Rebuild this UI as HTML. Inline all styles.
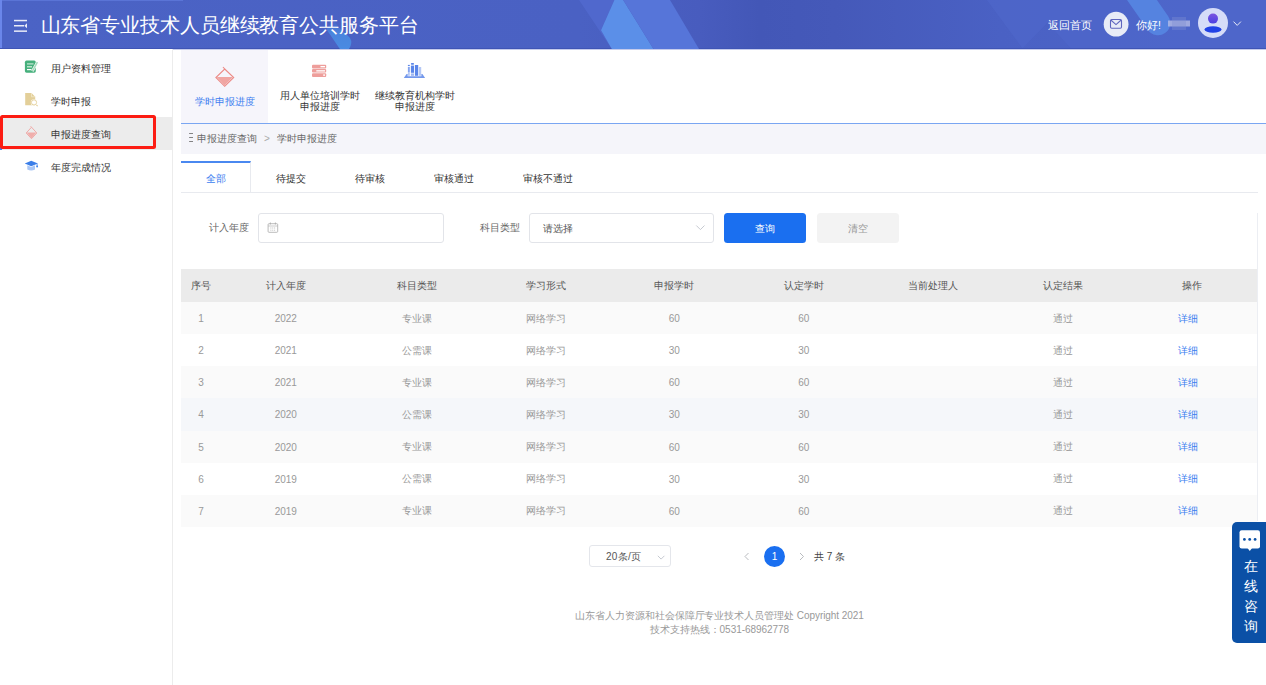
<!DOCTYPE html>
<html><head><meta charset="utf-8">
<style>
*{box-sizing:border-box;margin:0;padding:0}
html,body{width:1266px;height:685px;overflow:hidden;background:#fff}
body{font-family:"Liberation Sans",sans-serif;font-size:10px;color:#333;position:relative}
.abs{position:absolute}
#hdr{left:0;top:0;width:1266px;height:49px;background:#4a61c3;overflow:hidden}
#hdr .title{left:40.5px;top:10px;letter-spacing:-0.1px;font-size:20px;line-height:30px;color:#fff;white-space:nowrap}
#side{left:0;top:49px;width:173px;height:636px;border-right:1px solid #ececec;background:#fff}
.mi{position:absolute;left:0;width:172px;height:33px;line-height:33px;font-size:10px;color:#333}
.mi span{position:absolute;left:51px;top:1px}
.mi svg{position:absolute}
.tt{position:absolute;top:50px;height:73px;width:87px;text-align:center;font-size:10px;line-height:10.5px;color:#333}
.crumb{left:181px;top:124px;width:1085px;height:30px;background:#f5f5fa;color:#666;line-height:29px}
.tabs{left:181px;top:161px;width:1077px;height:32px;border-bottom:1px solid #e8eaef}
.tab{position:absolute;top:0;height:31px;line-height:32px;text-align:center;color:#333;border-top:2px solid transparent}
.inp{position:absolute;top:213px;height:30px;border:1px solid #e2e4e9;border-radius:3px;background:#fff}
.lbl{position:absolute;top:213px;line-height:30px;color:#666}
.btn{position:absolute;top:213px;height:30px;width:82px;border-radius:3.5px;text-align:center;line-height:32px}
table{position:absolute;left:181px;top:269px;width:1076px;border-collapse:collapse;table-layout:fixed}
th{height:33px;background:#ebebeb;font-weight:normal;color:#555;font-size:10px;text-align:center;padding:1px 0 0 0}
td{height:32.14px;color:#999;font-size:10px;text-align:center;padding:1px 0 0 0}
td:nth-child(3),th:nth-child(3){padding-left:4px}
td:nth-child(9){padding-right:9px}
th:nth-child(4),td:nth-child(4){padding-left:2px}
tr.o td{background:#fafafa}
tr.h td{background:#f5f7fa}
td a{color:#3a7ef0;text-decoration:none}
.foot{left:173px;width:1093px;text-align:center;color:#999;font-size:10px;line-height:13.5px;letter-spacing:-0.05px}
</style></head>
<body>
<div id="hdr" class="abs">
<svg class="abs" style="left:0;top:0" width="1266" height="49" viewBox="0 0 1266 49">
<defs>
<linearGradient id="hg" x1="0" x2="1" y1="0" y2="0">
<stop offset="0" stop-color="#4b63c5"/><stop offset="0.458" stop-color="#4a61c3"/><stop offset="0.553" stop-color="#485cbe"/><stop offset="0.6" stop-color="#4357b7"/><stop offset="0.66" stop-color="#4559b9"/><stop offset="0.79" stop-color="#4a61c4"/><stop offset="1" stop-color="#4e66ca"/>
</linearGradient>
<linearGradient id="sg" x1="0" y1="0" x2="0" y2="1"><stop offset="0" stop-color="#4a88e0" stop-opacity="0"/><stop offset="0.45" stop-color="#4a88e0" stop-opacity="0.9"/><stop offset="1" stop-color="#4a8be2"/></linearGradient>
</defs>
<rect width="1266" height="49" fill="url(#hg)"/>
<rect x="0" y="0" width="2" height="49" fill="#6a86ea"/>
<rect x="2" y="0" width="181" height="1" fill="#5a74d6"/>
<polygon points="987,0 1266,0 1266,49 1071.6,49 1047.4,22.8 1022,49 1023,49" fill="#4f66ca" opacity="0.7"/>
<rect x="0" y="48" width="1266" height="1" fill="#3f55b5"/>
<polygon points="579,0 614.4,0 601,30.3 611.8,49" fill="#5068cd"/>
<polygon points="614.4,0 623.2,0 653.5,49 611.8,49 601,30.3" fill="#5b8fe8"/>
<polygon points="623.2,0 670,0 699,49 653.5,49" fill="#5675d9"/>
<path d="M326.6,29.4 L339.9,49 L349,49 Q353,43 350,38 Q347,34 342,31 L333,20 Z" fill="url(#sg)"/>
<line x1="1135" y1="-10" x2="1158" y2="23" stroke="#5583e0" stroke-width="24.5" stroke-linecap="round"/>
<g fill="#e9ecf8">
<rect x="14" y="19.8" width="13" height="1.5"/>
<rect x="14" y="25" width="10" height="1.5"/>
<polygon points="27,23.3 27,28.3 24.3,25.8"/>
<rect x="14" y="30.4" width="13" height="1.5"/>
</g>
<circle cx="1116.1" cy="24.2" r="12.4" fill="#e8ecf7"/>
<rect x="1110.5" y="19.5" width="11" height="8.8" rx="1.2" fill="none" stroke="#5f67bf" stroke-width="1.1"/>
<polyline points="1110.8,20 1116,24.6 1121.2,20" fill="none" stroke="#5f67bf" stroke-width="1.1"/>
<g opacity="0.75"><rect x="1168" y="20.5" width="22" height="6" fill="#b9c0e6"/><rect x="1172" y="17" width="14" height="13" fill="#8e9ad8" opacity="0.4"/></g>
<circle cx="1213" cy="22.9" r="15" fill="#d5dcf8"/>
<defs><linearGradient id="ag" x1="0" y1="0" x2="0" y2="1"><stop offset="0" stop-color="#7b55e0"/><stop offset="1" stop-color="#4a40e2"/></linearGradient></defs>
<circle cx="1213" cy="18.6" r="5" fill="url(#ag)"/>
<ellipse cx="1213" cy="29.5" rx="8.5" ry="3.3" fill="#2142e6"/>
<polyline points="1233.5,21.6 1237.2,25.4 1240.9,21.6" fill="none" stroke="#e9ecf8" stroke-width="1"/>
</svg>
  <div class="abs title">山东省专业技术人员继续教育公共服务平台</div>
  <div class="abs" style="left:1048px;top:17px;font-size:10.5px;line-height:16px;color:#fff">返回首页</div>
  <div class="abs" style="left:1136px;top:17px;font-size:10.5px;line-height:16px;color:#fff">你好!</div>
</div>
<div class="abs" style="left:0;top:49px;width:1266px;height:1px;background:#c5cbec"></div>
<div id="side" class="abs">
  <div class="mi" style="top:2px"><span>用户资料管理</span></div>
  <div class="mi" style="top:35px"><span>学时申报</span></div>
  <div class="mi" style="top:68px;background:#ececec"><span>申报进度查询</span></div>
  <div class="mi" style="top:101px"><span>年度完成情况</span></div>
</div>
<div class="abs" style="left:0;top:117px;width:2px;height:33px;background:#3a7df0"></div>
<div class="abs" style="left:0;top:115px;width:156px;height:34px;border:3px solid #fc1c12;border-radius:2.5px"></div>

<div class="tt" style="left:181px;background:#f6f5fb;color:#3d7ef0"><div style="position:absolute;top:47px;width:100%">学时申报进度</div></div>
<div class="tt" style="left:276px"><div style="position:absolute;top:41px;width:100%">用人单位培训学时<br>申报进度</div></div>
<div class="tt" style="left:371px"><div style="position:absolute;top:41px;width:100%">继续教育机构学时<br>申报进度</div></div>
<div class="abs" style="left:181px;top:123px;width:1085px;height:1px;background:#7aa6f2"></div>
<div class="abs crumb"><span style="position:absolute;left:16px">申报进度查询</span><span style="position:absolute;left:83px;color:#aaa">&gt;</span><span style="position:absolute;left:96px">学时申报进度</span></div>

<div class="abs tabs">
  <div class="tab" style="left:0;width:70px;color:#3a7df0;border-top:2px solid #4a88f0;border-right:1px solid #e8eaef">全部</div>
  <div class="tab" style="left:70px;width:79px">待提交</div>
  <div class="tab" style="left:149px;width:79px">待审核</div>
  <div class="tab" style="left:228px;width:89px">审核通过</div>
  <div class="tab" style="left:317px;width:99px">审核不通过</div>
</div>

<div class="lbl" style="left:209px">计入年度</div>
<div class="inp" style="left:258px;width:186px"></div>
<div class="lbl" style="left:480px">科目类型</div>
<div class="inp" style="left:529px;width:185px"><span style="position:absolute;left:13px;top:1px;line-height:28px;color:#555">请选择</span></div>
<div class="btn" style="left:724px;background:#1a6ff0;color:#fff">查询</div>
<div class="btn" style="left:817px;background:#f3f3f3;color:#999">清空</div>

<table>
<colgroup><col style="width:40px"><col><col><col><col><col><col><col><col></colgroup>
<tr><th>序号</th><th>计入年度</th><th>科目类型</th><th>学习形式</th><th>申报学时</th><th>认定学时</th><th>当前处理人</th><th>认定结果</th><th>操作</th></tr>
<tr class="o"><td>1</td><td>2022</td><td>专业课</td><td>网络学习</td><td>60</td><td>60</td><td></td><td>通过</td><td><a>详细</a></td></tr>
<tr><td>2</td><td>2021</td><td>公需课</td><td>网络学习</td><td>30</td><td>30</td><td></td><td>通过</td><td><a>详细</a></td></tr>
<tr class="o"><td>3</td><td>2021</td><td>专业课</td><td>网络学习</td><td>60</td><td>60</td><td></td><td>通过</td><td><a>详细</a></td></tr>
<tr class="h"><td>4</td><td>2020</td><td>公需课</td><td>网络学习</td><td>30</td><td>30</td><td></td><td>通过</td><td><a>详细</a></td></tr>
<tr class="o"><td>5</td><td>2020</td><td>专业课</td><td>网络学习</td><td>60</td><td>60</td><td></td><td>通过</td><td><a>详细</a></td></tr>
<tr><td>6</td><td>2019</td><td>公需课</td><td>网络学习</td><td>30</td><td>30</td><td></td><td>通过</td><td><a>详细</a></td></tr>
<tr class="o"><td>7</td><td>2019</td><td>专业课</td><td>网络学习</td><td>60</td><td>60</td><td></td><td>通过</td><td><a>详细</a></td></tr>
</table>

<div class="abs" style="left:589px;top:545px;width:82px;height:22px;border:1px solid #e4e6eb;border-radius:3px;line-height:21px;color:#555"><span style="position:absolute;left:16px;letter-spacing:0.3px">20条/页</span></div>
<div class="abs" style="left:764px;top:546px;width:21px;height:21px;border-radius:50%;background:#1a6ff0;color:#fff;text-align:center;line-height:21px">1</div>
<div class="abs" style="left:814px;top:546px;line-height:21px;color:#444">共 7 条</div>

<div class="abs foot" style="top:609px">山东省人力资源和社会保障厅专业技术人员管理处 Copyright 2021<br>技术支持热线：0531-68962778</div>

<div class="abs" style="left:1257px;top:213px;width:1px;height:308px;background:#eceef3"></div>
<div class="abs" style="left:1232px;top:522px;width:34px;height:121px;background:#0b50a6;border-radius:5px 0 0 5px"></div>
<div class="abs" style="left:1233.5px;top:556px;width:34px;text-align:center;color:#fff;font-size:14px;line-height:20px">在<br>线<br>咨<br>询</div>

<svg class="abs" style="left:0;top:0;overflow:visible" width="1266" height="685">
<!-- side icon 1 -->
<rect x="24.9" y="60.6" width="10.9" height="12.1" rx="1.6" fill="#46b07c"/>
<rect x="27" y="63.3" width="6.5" height="1.2" fill="#c4e8d3"/>
<rect x="27" y="66.2" width="5" height="1.2" fill="#d8f0e2"/>
<rect x="27" y="69" width="4.5" height="1.2" fill="#fff"/>
<line x1="37.4" y1="62.2" x2="32.4" y2="71.2" stroke="#fff" stroke-width="2.6"/>
<line x1="37.4" y1="62.2" x2="32.4" y2="71.2" stroke="#a6dbbd" stroke-width="1.5"/>
<!-- side icon 2 -->
<path d="M25.2,93 L31.5,93 L35.2,96.8 L35.2,105.3 L25.2,105.3 Z" fill="#e3cf99"/>
<path d="M31.5,93 L31.5,96.8 L35.2,96.8" fill="none" stroke="#f3e8cb" stroke-width="0.8"/>
<line x1="34" y1="102.4" x2="37.8" y2="106.3" stroke="#fff" stroke-width="2.4"/>
<line x1="34" y1="102.4" x2="37.6" y2="106.1" stroke="#e3cf99" stroke-width="1.1"/>
<circle cx="34" cy="102.4" r="3.2" fill="#fff"/>
<circle cx="34" cy="102.4" r="2.6" fill="#fff" stroke="#e3cf99" stroke-width="0.9"/>
<!-- side icon 3 diamond -->
<path d="M31.5,127.2 L36.8,133 L31.5,138.7 L26.2,133 Z" fill="none" stroke="#eea3a0" stroke-width="0.9"/>
<line x1="31.5" y1="127.2" x2="30.6" y2="126.2" stroke="#eea3a0" stroke-width="0.9"/>
<path d="M26.6,132.6 L36.4,132.6 L31.5,138.3 Z" fill="#f0aeab"/>
<!-- side icon 4 cap -->
<path d="M24.8,163.4 L31.2,160.8 L37.9,163.4 L31.2,166.2 Z" fill="#3b7ee8"/>
<path d="M27.3,165.3 L31.2,166.9 L35,165.3 L35,169.6 Q31.2,171.6 27.3,169.6 Z" fill="#a9c6f5"/>
<rect x="36.6" y="163.6" width="1" height="3" fill="#6a9cee"/>
<circle cx="37.1" cy="166.5" r="0.9" fill="#3b7ee8"/>
<!-- tab1 diamond -->
<path d="M224.7,69 L233.7,77.5 L224.7,86.3 L215.9,77.5 Z" fill="none" stroke="#ec8a86" stroke-width="1.1"/>
<line x1="224.7" y1="69" x2="223" y2="67" stroke="#ec8a86" stroke-width="1.1"/>
<path d="M216.6,77 L233,77 L224.7,85.6 Z" fill="#f0a5a2"/>
<!-- tab2 server -->
<g fill="#ee9e9b">
<rect x="312" y="64.8" width="14.2" height="3.6" rx="1"/>
<rect x="312" y="69" width="14.2" height="3.6" rx="1"/>
<rect x="312" y="73.2" width="14.2" height="3.8" rx="1"/>
</g>
<g fill="#fff"><rect x="320.5" y="66" width="4.5" height="1.3"/><rect x="316.3" y="70.2" width="8.7" height="1.3"/><rect x="323.2" y="74.4" width="1.8" height="1.4"/></g>
<!-- tab3 books -->
<g fill="#5b86e9">
<path d="M403.8,77.9 L406.6,74 L407.6,74 L407.6,76.2 L421.4,76.2 L421.4,74 L422.4,74 L425.1,77.9 Z" opacity="0.85"/>
<rect x="407.9" y="64.9" width="1.9" height="1.2"/>
<rect x="407.9" y="67" width="1.9" height="5.6" opacity="0.75"/>
<rect x="407.9" y="73" width="1.9" height="2.8" opacity="0.45"/>
<rect x="410.9" y="63" width="3.1" height="1.7" rx="0.8"/>
<rect x="410.9" y="65.6" width="3.1" height="7.2"/>
<rect x="410.9" y="73.4" width="3.1" height="2.4" opacity="0.6"/>
<rect x="414.9" y="65" width="3.3" height="10.8"/>
<rect x="418.9" y="67" width="2.3" height="8.8" opacity="0.45"/>
</g>
<!-- crumb icon -->
<g fill="#777"><rect x="189.1" y="133" width="3.9" height="0.9"/><rect x="189.1" y="137" width="3.9" height="0.9"/><rect x="189.1" y="141" width="3.9" height="0.9"/></g>
<!-- calendar -->
<rect x="268.1" y="223.7" width="9.6" height="8.6" rx="0.9" fill="none" stroke="#a9a9a9" stroke-width="0.8"/>
<line x1="268.1" y1="226" x2="277.7" y2="226" stroke="#b5b5b5" stroke-width="0.7"/>
<line x1="270.4" y1="222.5" x2="270.4" y2="224.5" stroke="#a9a9a9" stroke-width="0.8"/>
<line x1="275.4" y1="222.5" x2="275.4" y2="224.5" stroke="#a9a9a9" stroke-width="0.8"/>
<g fill="#b0b0b0"><rect x="270.5" y="227.5" width="0.8" height="1"/><rect x="272.4" y="227.5" width="0.8" height="1"/><rect x="274.3" y="227.5" width="0.8" height="1"/>
<rect x="270.5" y="229.7" width="0.8" height="1"/><rect x="272.4" y="229.7" width="0.8" height="1"/><rect x="274.3" y="229.7" width="0.8" height="1"/></g>
<!-- select chevron -->
<polyline points="696.3,225.5 700.4,229.6 704.5,225.5" fill="none" stroke="#c0c4cc" stroke-width="0.9"/>
<!-- pager chevron -->
<polyline points="657.8,555.8 661.1,559.1 664.4,555.8" fill="none" stroke="#c0c4cc" stroke-width="0.9"/>
<polyline points="748.5,553 745,556.5 748.5,560" fill="none" stroke="#b0b3b8" stroke-width="0.9"/>
<polyline points="800,553 803.5,556.5 800,560" fill="none" stroke="#b0b3b8" stroke-width="0.9"/>
<!-- consult icon -->
<rect x="1239.5" y="530.2" width="20.5" height="18.3" rx="2.2" fill="#fff"/>
<path d="M1247.5,548 L1249.8,551 L1252.1,548 Z" fill="#fff"/>
<g fill="#0b50a6"><circle cx="1244.4" cy="539.4" r="1.4"/><circle cx="1249.7" cy="539.4" r="1.4"/><circle cx="1255.1" cy="539.4" r="1.4"/></g>
</svg>
</body></html>
